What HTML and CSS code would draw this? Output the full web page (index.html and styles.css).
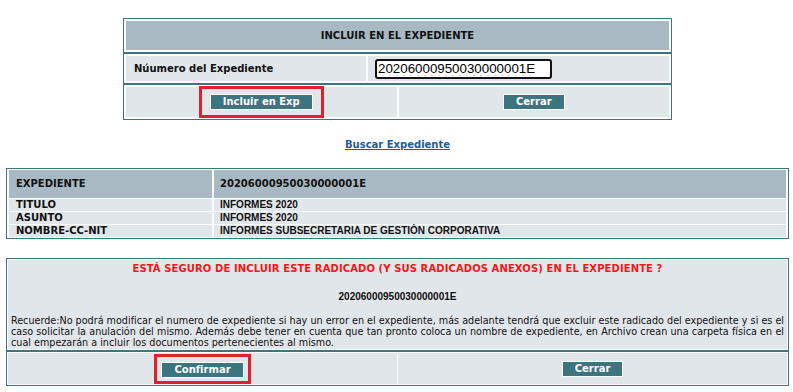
FILE: index.html
```html
<!DOCTYPE html>
<html lang="es">
<head>
  <meta charset="UTF-8" />
  <title>Incluir en el expediente</title>
  <link rel="stylesheet" href="styles.css">
</head>
<body>

<div class="panel top-panel">
  <table>
    <tr><td class="head-cell">INCLUIR EN EL EXPEDIENTE</td></tr>
  </table>
  <table>
    <tr>
      <td class="label-cell">Núumero del Expediente</td>
      <td class="input-cell"><input type="text" class="exp-input" value="20206000950030000001E"></td>
    </tr>
  </table>
  <table>
    <tr>
      <td class="btn-cell"><span class="mark mark-small"><button class="btn">Incluir en Exp</button></span></td>
      <td class="btn-cell"><button class="btn">Cerrar</button></td>
    </tr>
  </table>
</div>

<div class="search-link"><a href="#">Buscar Expediente</a></div>

<div class="panel info-panel">
  <table>
    <tr class="info-head">
      <td class="info-label">EXPEDIENTE</td>
      <td class="info-value-head">20206000950030000001E</td>
    </tr>
    <tr>
      <td class="info-label">TITULO</td>
      <td class="info-value">INFORMES 2020</td>
    </tr>
    <tr>
      <td class="info-label">ASUNTO</td>
      <td class="info-value">INFORMES 2020</td>
    </tr>
    <tr>
      <td class="info-label">NOMBRE-CC-NIT</td>
      <td class="info-value">INFORMES SUBSECRETARIA DE GESTIÒN CORPORATIVA</td>
    </tr>
  </table>
</div>

<div class="panel confirm-panel">
  <table>
    <tr>
      <td class="msg-cell">
        <div class="warning">ESTÁ SEGURO DE INCLUIR ESTE RADICADO (Y SUS RADICADOS ANEXOS) EN EL EXPEDIENTE ?</div>
        <div class="msg-number">20206000950030000001E</div>
        <p class="msg-text">Recuerde:No podrá modificar el numero de expediente si hay un error en el expediente, más adelante tendrá que excluir este radicado del expediente y si es el caso solicitar la anulación del mismo. Además debe tener en cuenta que tan pronto coloca un nombre de expediente, en Archivo crean una carpeta física en el cual empezarán a incluir los documentos pertenecientes al mismo.</p>
      </td>
    </tr>
  </table>
  <table>
    <tr>
      <td class="btn-cell confirm-btn-cell"><span class="mark mark-confirm"><button class="btn">Confirmar</button></span></td>
      <td class="btn-cell confirm-btn-cell"><button class="btn">Cerrar</button></td>
    </tr>
  </table>
</div>

</body>
</html>
```

FILE: styles.css
```css
body {
  margin: 0;
  padding: 18px 4px 0 6px;
  background: white;
  font-family: "DejaVu Sans", Verdana, sans-serif;
  font-size: 10px;
  color: #111;
}
table {
  width: 100%;
  border-collapse: separate;
  border-spacing: 1px;
}
td {
  padding: 0;
}
.panel {
  border: 1px solid #3d7580;
  background: white;
}
.top-panel {
  width: 547px;
  margin: 0 auto;
}
.top-panel table {
  border-spacing: 2px;
}
.top-panel table + table {
  border-top: 2px solid #3d7580;
}
.head-cell {
  background: #a9b9c4;
  height: 29px;
  text-align: center;
  font-weight: bold;
}
.label-cell {
  background: #e1e6ea;
  height: 25px;
  width: 232px;
  padding-left: 8px;
  font-weight: bold;
}
.input-cell {
  background: #e1e6ea;
  padding-left: 7px;
}
.exp-input {
  width: 177px;
  height: 20px;
  box-sizing: border-box;
  border: 2px solid #111;
  border-radius: 3px;
  padding: 0 1px;
  font-family: "Liberation Sans", Arial, sans-serif;
  font-size: 13.33px;
  color: #000;
  text-decoration: underline wavy #e02020;
  text-underline-offset: 2px;
}
.btn-cell {
  background: #e1e6ea;
  height: 30px;
  width: 50%;
  text-align: center;
}
.btn {
  background: #3c7480;
  color: white;
  border: 1px solid white;
  font-family: "DejaVu Sans", Verdana, sans-serif;
  font-weight: bold;
  font-size: 10px;
  height: 16px;
  padding: 0 12px;
  line-height: 12px;
  vertical-align: middle;
}
/* red annotation boxes drawn over the buttons */
.mark {
  display: inline-block;
  border: 3px solid #e0202a;
  margin: -6px 0;
  vertical-align: middle;
}
.mark-small {
  padding: 5px 8px;
}
.search-link {
  text-align: center;
  margin: 19px 0 18px;
  font-weight: bold;
}
.search-link a {
  color: #1a5d9a;
}
.info-panel table {
  border-spacing: 2px 1px;
}
.info-head td {
  background: #a9b9c4;
  height: 28px;
}
.info-label {
  background: #e1e6ea;
  width: 196px;
  padding: 0 0 0 7px;
  font-weight: bold;
  line-height: 12px;
}
.info-value, .info-value-head {
  background: #e1e6ea;
  padding-left: 6px;
  font-family: "Liberation Sans", Arial, sans-serif;
  font-weight: bold;
  font-size: 10px;
  line-height: 12px;
}
.info-value-head {
  background: #a9b9c4;
  font-family: "DejaVu Sans", Verdana, sans-serif;
}
.confirm-panel {
  margin-top: 19px;
}
.confirm-panel table + table {
  border-top: 2px solid #3d7580;
}
.msg-cell {
  background: #e1e6ea;
  padding: 2px 3px 1px 3px;
}
.warning {
  color: #f01818;
  font-weight: bold;
  text-align: center;
  line-height: 14px;
  letter-spacing: 0.1px;
}
.msg-number {
  margin-top: 15px;
  text-align: center;
  font-family: "Liberation Sans", Arial, sans-serif;
  font-weight: bold;
  font-size: 10px;
}
.msg-text {
  margin: 13px 0 0;
  font-family: "DejaVu Sans Condensed", "DejaVu Sans", sans-serif;
  font-size: 10.7px;
  line-height: 11px;
  text-align: justify;
}
.confirm-btn-cell {
  height: 31px;
}
.mark-confirm {
  padding: 5px 4px 3px;
}
```
